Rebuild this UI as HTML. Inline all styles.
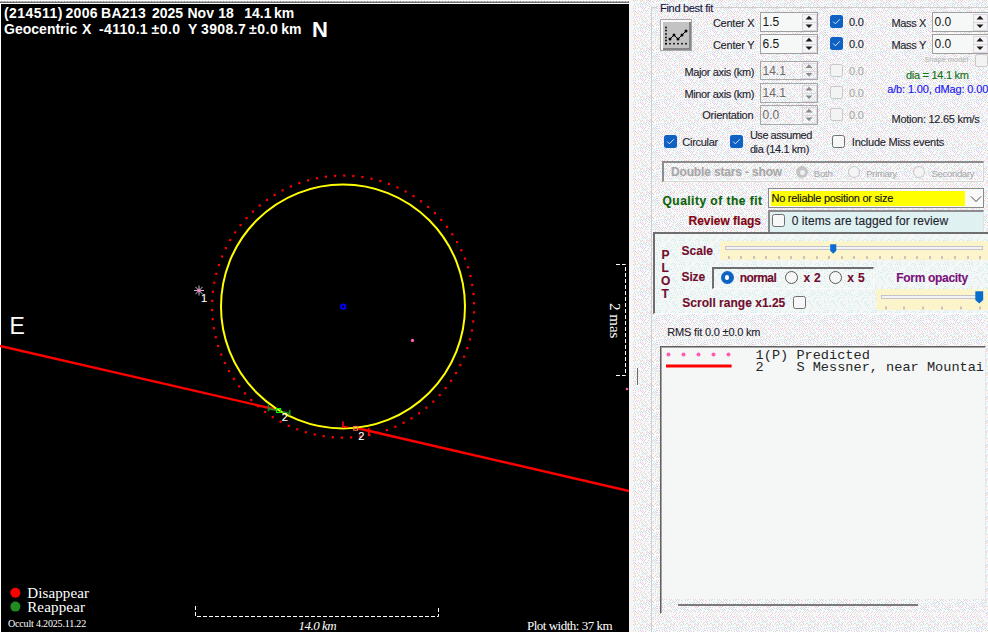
<!DOCTYPE html>
<html><head><meta charset="utf-8"><style>
html,body{margin:0;padding:0;}
body{width:988px;height:632px;overflow:hidden;position:relative;background:#ededed;font-family:"Liberation Sans",sans-serif;}
.t{position:absolute;white-space:pre;}
.k{-webkit-text-stroke:0.12px currentColor;}
</style></head><body>
<div style="position:absolute;left:0px;top:0px;width:629px;height:1px;background:#fbfbfb"></div><div style="position:absolute;left:0px;top:1px;width:629px;height:1px;background:repeating-linear-gradient(90deg,#c4c4c4 0 1px,#8e8e8e 1px 2px,#c4c4c4 2px 3px)"></div><div style="position:absolute;left:0px;top:2px;width:629px;height:1px;background:#6c6c6c"></div><div style="position:absolute;left:0px;top:3px;width:629px;height:1px;background:#fff"></div><div style="position:absolute;left:0px;top:3px;width:1px;height:629px;background:#fff"></div><div style="position:absolute;left:1px;top:4px;width:628px;height:628px;background:#000"></div><div style="position:absolute;left:629px;top:0px;width:4px;height:632px;background:#f6f6f6"></div><svg width="629" height="632" style="position:absolute;left:0;top:0"><line x1="0" y1="346" x2="276.5" y2="409.6" stroke="#ff0000" stroke-width="2.4"/><line x1="356.5" y1="428" x2="629" y2="491" stroke="#ff0000" stroke-width="2.4"/><circle cx="343" cy="306.5" r="122" fill="none" stroke="#ffff00" stroke-width="2"/><rect x="472.88" y="311.21" width="2.2" height="2.2" fill="#ff0000"/><rect x="472.16" y="320.33" width="2.2" height="2.2" fill="#ff0000"/><rect x="470.81" y="329.37" width="2.2" height="2.2" fill="#ff0000"/><rect x="468.83" y="338.30" width="2.2" height="2.2" fill="#ff0000"/><rect x="466.23" y="347.07" width="2.2" height="2.2" fill="#ff0000"/><rect x="463.03" y="355.63" width="2.2" height="2.2" fill="#ff0000"/><rect x="459.24" y="363.95" width="2.2" height="2.2" fill="#ff0000"/><rect x="454.87" y="371.99" width="2.2" height="2.2" fill="#ff0000"/><rect x="449.96" y="379.70" width="2.2" height="2.2" fill="#ff0000"/><rect x="444.52" y="387.05" width="2.2" height="2.2" fill="#ff0000"/><rect x="438.58" y="394.00" width="2.2" height="2.2" fill="#ff0000"/><rect x="432.17" y="400.52" width="2.2" height="2.2" fill="#ff0000"/><rect x="425.33" y="406.58" width="2.2" height="2.2" fill="#ff0000"/><rect x="418.07" y="412.15" width="2.2" height="2.2" fill="#ff0000"/><rect x="410.45" y="417.20" width="2.2" height="2.2" fill="#ff0000"/><rect x="402.49" y="421.70" width="2.2" height="2.2" fill="#ff0000"/><rect x="394.24" y="425.63" width="2.2" height="2.2" fill="#ff0000"/><rect x="385.73" y="428.99" width="2.2" height="2.2" fill="#ff0000"/><rect x="377.01" y="431.74" width="2.2" height="2.2" fill="#ff0000"/><rect x="368.12" y="433.87" width="2.2" height="2.2" fill="#ff0000"/><rect x="359.10" y="435.38" width="2.2" height="2.2" fill="#ff0000"/><rect x="350.00" y="436.26" width="2.2" height="2.2" fill="#ff0000"/><rect x="340.86" y="436.50" width="2.2" height="2.2" fill="#ff0000"/><rect x="331.72" y="436.10" width="2.2" height="2.2" fill="#ff0000"/><rect x="322.64" y="435.06" width="2.2" height="2.2" fill="#ff0000"/><rect x="313.65" y="433.39" width="2.2" height="2.2" fill="#ff0000"/><rect x="304.79" y="431.11" width="2.2" height="2.2" fill="#ff0000"/><rect x="296.12" y="428.20" width="2.2" height="2.2" fill="#ff0000"/><rect x="287.68" y="424.70" width="2.2" height="2.2" fill="#ff0000"/><rect x="279.49" y="420.63" width="2.2" height="2.2" fill="#ff0000"/><rect x="271.61" y="415.98" width="2.2" height="2.2" fill="#ff0000"/><rect x="264.08" y="410.81" width="2.2" height="2.2" fill="#ff0000"/><rect x="256.92" y="405.11" width="2.2" height="2.2" fill="#ff0000"/><rect x="250.18" y="398.94" width="2.2" height="2.2" fill="#ff0000"/><rect x="243.89" y="392.30" width="2.2" height="2.2" fill="#ff0000"/><rect x="238.07" y="385.25" width="2.2" height="2.2" fill="#ff0000"/><rect x="232.76" y="377.80" width="2.2" height="2.2" fill="#ff0000"/><rect x="227.98" y="370.01" width="2.2" height="2.2" fill="#ff0000"/><rect x="223.76" y="361.90" width="2.2" height="2.2" fill="#ff0000"/><rect x="220.12" y="353.51" width="2.2" height="2.2" fill="#ff0000"/><rect x="217.06" y="344.89" width="2.2" height="2.2" fill="#ff0000"/><rect x="214.62" y="336.08" width="2.2" height="2.2" fill="#ff0000"/><rect x="212.80" y="327.12" width="2.2" height="2.2" fill="#ff0000"/><rect x="211.60" y="318.06" width="2.2" height="2.2" fill="#ff0000"/><rect x="211.04" y="308.93" width="2.2" height="2.2" fill="#ff0000"/><rect x="211.12" y="299.79" width="2.2" height="2.2" fill="#ff0000"/><rect x="211.84" y="290.67" width="2.2" height="2.2" fill="#ff0000"/><rect x="213.19" y="281.63" width="2.2" height="2.2" fill="#ff0000"/><rect x="215.17" y="272.70" width="2.2" height="2.2" fill="#ff0000"/><rect x="217.77" y="263.93" width="2.2" height="2.2" fill="#ff0000"/><rect x="220.97" y="255.37" width="2.2" height="2.2" fill="#ff0000"/><rect x="224.76" y="247.05" width="2.2" height="2.2" fill="#ff0000"/><rect x="229.13" y="239.01" width="2.2" height="2.2" fill="#ff0000"/><rect x="234.04" y="231.30" width="2.2" height="2.2" fill="#ff0000"/><rect x="239.48" y="223.95" width="2.2" height="2.2" fill="#ff0000"/><rect x="245.42" y="217.00" width="2.2" height="2.2" fill="#ff0000"/><rect x="251.83" y="210.48" width="2.2" height="2.2" fill="#ff0000"/><rect x="258.67" y="204.42" width="2.2" height="2.2" fill="#ff0000"/><rect x="265.93" y="198.85" width="2.2" height="2.2" fill="#ff0000"/><rect x="273.55" y="193.80" width="2.2" height="2.2" fill="#ff0000"/><rect x="281.51" y="189.30" width="2.2" height="2.2" fill="#ff0000"/><rect x="289.76" y="185.37" width="2.2" height="2.2" fill="#ff0000"/><rect x="298.27" y="182.01" width="2.2" height="2.2" fill="#ff0000"/><rect x="306.99" y="179.26" width="2.2" height="2.2" fill="#ff0000"/><rect x="315.88" y="177.13" width="2.2" height="2.2" fill="#ff0000"/><rect x="324.90" y="175.62" width="2.2" height="2.2" fill="#ff0000"/><rect x="334.00" y="174.74" width="2.2" height="2.2" fill="#ff0000"/><rect x="343.14" y="174.50" width="2.2" height="2.2" fill="#ff0000"/><rect x="352.28" y="174.90" width="2.2" height="2.2" fill="#ff0000"/><rect x="361.36" y="175.94" width="2.2" height="2.2" fill="#ff0000"/><rect x="370.35" y="177.61" width="2.2" height="2.2" fill="#ff0000"/><rect x="379.21" y="179.89" width="2.2" height="2.2" fill="#ff0000"/><rect x="387.88" y="182.80" width="2.2" height="2.2" fill="#ff0000"/><rect x="396.32" y="186.30" width="2.2" height="2.2" fill="#ff0000"/><rect x="404.51" y="190.37" width="2.2" height="2.2" fill="#ff0000"/><rect x="412.39" y="195.02" width="2.2" height="2.2" fill="#ff0000"/><rect x="419.92" y="200.19" width="2.2" height="2.2" fill="#ff0000"/><rect x="427.08" y="205.89" width="2.2" height="2.2" fill="#ff0000"/><rect x="433.82" y="212.06" width="2.2" height="2.2" fill="#ff0000"/><rect x="440.11" y="218.70" width="2.2" height="2.2" fill="#ff0000"/><rect x="445.93" y="225.75" width="2.2" height="2.2" fill="#ff0000"/><rect x="451.24" y="233.20" width="2.2" height="2.2" fill="#ff0000"/><rect x="456.02" y="240.99" width="2.2" height="2.2" fill="#ff0000"/><rect x="460.24" y="249.10" width="2.2" height="2.2" fill="#ff0000"/><rect x="463.88" y="257.49" width="2.2" height="2.2" fill="#ff0000"/><rect x="466.94" y="266.11" width="2.2" height="2.2" fill="#ff0000"/><rect x="469.38" y="274.92" width="2.2" height="2.2" fill="#ff0000"/><rect x="471.20" y="283.88" width="2.2" height="2.2" fill="#ff0000"/><rect x="472.40" y="292.94" width="2.2" height="2.2" fill="#ff0000"/><rect x="472.96" y="302.07" width="2.2" height="2.2" fill="#ff0000"/><line x1="199" y1="290.5" x2="204.00" y2="290.50" stroke="#c4bcd4" stroke-width="1"/><line x1="199" y1="290.5" x2="202.54" y2="294.04" stroke="#c4bcd4" stroke-width="1"/><line x1="199" y1="290.5" x2="199.00" y2="295.50" stroke="#c4bcd4" stroke-width="1"/><line x1="199" y1="290.5" x2="195.46" y2="294.04" stroke="#c4bcd4" stroke-width="1"/><line x1="199" y1="290.5" x2="194.00" y2="290.50" stroke="#c4bcd4" stroke-width="1"/><line x1="199" y1="290.5" x2="195.46" y2="286.96" stroke="#c4bcd4" stroke-width="1"/><line x1="199" y1="290.5" x2="199.00" y2="285.50" stroke="#c4bcd4" stroke-width="1"/><line x1="199" y1="290.5" x2="202.54" y2="286.96" stroke="#c4bcd4" stroke-width="1"/><circle cx="199" cy="290.5" r="1.8" fill="#ff78c8"/><circle cx="343.2" cy="306.6" r="2.2" fill="none" stroke="#0000ff" stroke-width="2"/><circle cx="412.5" cy="340.4" r="1.7" fill="#ff60b0"/><circle cx="627" cy="389" r="1.3" fill="#ff60b0"/><polyline points="268.5,408.6 276.3,410.3" fill="none" stroke="#208a20" stroke-width="1.6"/><line x1="268.5" y1="404.5" x2="268.5" y2="411.2" stroke="#208a20" stroke-width="1.6"/><polyline points="282.5,411.7 289.7,413.3" fill="none" stroke="#208a20" stroke-width="1.6"/><line x1="289.7" y1="409.8" x2="289.7" y2="415.5" stroke="#208a20" stroke-width="1.6"/><rect x="276.6" y="408.5" width="4" height="4" fill="none" stroke="#00ff00" stroke-width="1.1"/><line x1="343" y1="421.5" x2="343" y2="428" stroke="#ff0000" stroke-width="1.6"/><line x1="342.5" y1="426.3" x2="348.3" y2="427.2" stroke="#ff0000" stroke-width="1.6"/><line x1="368.8" y1="428" x2="368.8" y2="435.5" stroke="#ff0000" stroke-width="1.6"/><rect x="368" y="434" width="2.4" height="1.6" fill="#ff0000"/><rect x="353.7" y="426.4" width="3.8" height="3.8" fill="none" stroke="#ff6a4a" stroke-width="1.1"/><polyline points="616,264.5 625.5,264.5 625.5,375.5 616,375.5" fill="none" stroke="#fff" stroke-width="1" stroke-dasharray="4 2"/><polyline points="195.5,606 195.5,616.5 438.5,616.5 438.5,606" fill="none" stroke="#fff" stroke-width="1" stroke-dasharray="4 2"/><circle cx="15.4" cy="592.8" r="5" fill="#ff0000"/><circle cx="15.4" cy="606.6" r="5" fill="#228b22"/></svg><div class="t" style="left:3.90px;top:6.15px;font:bold 14px/14px 'Liberation Sans', sans-serif;color:#ffffff;letter-spacing:0.45px">(214511)</div><div class="t" style="left:65.50px;top:6.15px;font:bold 14px/14px 'Liberation Sans', sans-serif;color:#ffffff;letter-spacing:0.3px">2006</div><div class="t" style="left:101.10px;top:6.15px;font:bold 14px/14px 'Liberation Sans', sans-serif;color:#ffffff;letter-spacing:0.25px">BA213</div><div class="t" style="left:152.00px;top:6.15px;font:bold 14px/14px 'Liberation Sans', sans-serif;color:#ffffff;letter-spacing:0px">2025</div><div class="t" style="left:187.50px;top:6.15px;font:bold 14px/14px 'Liberation Sans', sans-serif;color:#ffffff;letter-spacing:0px">Nov</div><div class="t" style="left:218.30px;top:6.15px;font:bold 14px/14px 'Liberation Sans', sans-serif;color:#ffffff;letter-spacing:0px">18</div><div class="t" style="left:244.20px;top:6.15px;font:bold 14px/14px 'Liberation Sans', sans-serif;color:#ffffff;letter-spacing:0px">14.1</div><div class="t" style="left:274.00px;top:6.15px;font:bold 14px/14px 'Liberation Sans', sans-serif;color:#ffffff;letter-spacing:0px">km</div><div class="t" style="left:4.10px;top:22.25px;font:bold 14px/14px 'Liberation Sans', sans-serif;color:#ffffff;letter-spacing:0px">Geocentric</div><div class="t" style="left:82.10px;top:22.25px;font:bold 14px/14px 'Liberation Sans', sans-serif;color:#ffffff;letter-spacing:0px">X</div><div class="t" style="left:99.10px;top:22.25px;font:bold 14px/14px 'Liberation Sans', sans-serif;color:#ffffff;letter-spacing:0.3px">-4110.1</div><div class="t" style="left:151.50px;top:22.25px;font:bold 14px/14px 'Liberation Sans', sans-serif;color:#ffffff;letter-spacing:0.5px">±0.0</div><div class="t" style="left:188.00px;top:22.25px;font:bold 14px/14px 'Liberation Sans', sans-serif;color:#ffffff;letter-spacing:0px">Y</div><div class="t" style="left:201.00px;top:22.25px;font:bold 14px/14px 'Liberation Sans', sans-serif;color:#ffffff;letter-spacing:0.4px">3908.7</div><div class="t" style="left:249.10px;top:22.25px;font:bold 14px/14px 'Liberation Sans', sans-serif;color:#ffffff;letter-spacing:0.5px">±0.0</div><div class="t" style="left:281.20px;top:22.25px;font:bold 14px/14px 'Liberation Sans', sans-serif;color:#ffffff;letter-spacing:0px">km</div><div class="t" style="left:312.00px;top:18.87px;font:bold 22px/22px 'Liberation Sans', sans-serif;color:#ffffff;">N</div><div class="t" style="left:9.50px;top:314.53px;font:23px/23px 'Liberation Sans', sans-serif;color:#ffffff;">E</div><div class="t k" style="left:201.00px;top:292.69px;font:11px/11px 'Liberation Sans', sans-serif;color:#ffffff;">1</div><div class="t k" style="left:281.80px;top:412.29px;font:11px/11px 'Liberation Sans', sans-serif;color:#ffffff;">2</div><div class="t k" style="left:358.30px;top:431.29px;font:11px/11px 'Liberation Sans', sans-serif;color:#ffffff;">2</div><div class="t" style="left:27.20px;top:585.84px;font:15px/15px 'Liberation Serif', serif;color:#ffffff;letter-spacing:0.132px;">Disappear</div><div class="t" style="left:27.20px;top:599.54px;font:15px/15px 'Liberation Serif', serif;color:#ffffff;letter-spacing:0.171px;">Reappear</div><div class="t" style="left:8.00px;top:619.23px;font:10px/10px 'Liberation Serif', serif;color:#ffffff;letter-spacing:-0.173px;">Occult 4.2025.11.22</div><div class="t" style="left:298.60px;top:618.81px;font:italic 13px/13px 'Liberation Serif', serif;color:#ffffff;letter-spacing:-0.523px;">14.0 km</div><div class="t" style="left:527.00px;top:618.81px;font:13px/13px 'Liberation Serif', serif;color:#ffffff;letter-spacing:-0.502px;">Plot width: 37 km</div><div class="t" style="left:605.5px;top:313px;font:15px/15px 'Liberation Serif', serif;color:#fff;transform-origin:0 0;transform:translate(16px,-10px) rotate(90deg);">2 mas</div><svg width="355" height="632" style="position:absolute;left:633px;top:0" shape-rendering="crispEdges"><defs><pattern id="dz" width="24" height="24" patternUnits="userSpaceOnUse"><rect width="24" height="24" fill="#f7f8f8"/><rect x="0" y="0" width="1" height="1" fill="#f0d0c6"/><rect x="2" y="0" width="1" height="1" fill="#f0d0c6"/><rect x="4" y="0" width="1" height="1" fill="#c8ecec"/><rect x="7" y="0" width="1" height="1" fill="#f0d0c6"/><rect x="9" y="0" width="1" height="1" fill="#f0d0c6"/><rect x="13" y="0" width="1" height="1" fill="#d0d0f4"/><rect x="15" y="0" width="1" height="1" fill="#f0d0c6"/><rect x="17" y="0" width="1" height="1" fill="#f0d0c6"/><rect x="21" y="0" width="1" height="1" fill="#c8ecec"/><rect x="1" y="1" width="1" height="1" fill="#c8ecec"/><rect x="8" y="1" width="1" height="1" fill="#f0d0c6"/><rect x="10" y="1" width="1" height="1" fill="#c8ecec"/><rect x="14" y="1" width="1" height="1" fill="#f0d0c6"/><rect x="16" y="1" width="1" height="1" fill="#d0d0f4"/><rect x="19" y="1" width="1" height="1" fill="#f0d0c6"/><rect x="23" y="1" width="1" height="1" fill="#d0d0f4"/><rect x="7" y="2" width="1" height="1" fill="#c8ecec"/><rect x="11" y="2" width="1" height="1" fill="#d0d0f4"/><rect x="13" y="2" width="1" height="1" fill="#f2c8f2"/><rect x="17" y="2" width="1" height="1" fill="#c8ecec"/><rect x="20" y="2" width="1" height="1" fill="#f2c8f2"/><rect x="3" y="3" width="1" height="1" fill="#d0d0f4"/><rect x="6" y="3" width="1" height="1" fill="#c8ecec"/><rect x="8" y="3" width="1" height="1" fill="#c8ecec"/><rect x="10" y="3" width="1" height="1" fill="#f0d0c6"/><rect x="12" y="3" width="1" height="1" fill="#d0d0f4"/><rect x="15" y="3" width="1" height="1" fill="#f0d0c6"/><rect x="1" y="4" width="1" height="1" fill="#d0d0f4"/><rect x="4" y="4" width="1" height="1" fill="#c8ecec"/><rect x="7" y="4" width="1" height="1" fill="#d0d0f4"/><rect x="9" y="4" width="1" height="1" fill="#f0d0c6"/><rect x="13" y="4" width="1" height="1" fill="#c8ecec"/><rect x="16" y="4" width="1" height="1" fill="#d0d0f4"/><rect x="19" y="4" width="1" height="1" fill="#f2c8f2"/><rect x="23" y="4" width="1" height="1" fill="#f0d0c6"/><rect x="5" y="5" width="1" height="1" fill="#d0d0f4"/><rect x="8" y="5" width="1" height="1" fill="#c8ecec"/><rect x="12" y="5" width="1" height="1" fill="#d0d0f4"/><rect x="14" y="5" width="1" height="1" fill="#c8ecec"/><rect x="17" y="5" width="1" height="1" fill="#c8ecec"/><rect x="21" y="5" width="1" height="1" fill="#c8ecec"/><rect x="0" y="6" width="1" height="1" fill="#f2c8f2"/><rect x="2" y="6" width="1" height="1" fill="#f0d0c6"/><rect x="7" y="6" width="1" height="1" fill="#d0d0f4"/><rect x="9" y="6" width="1" height="1" fill="#c8ecec"/><rect x="16" y="6" width="1" height="1" fill="#d0d0f4"/><rect x="18" y="6" width="1" height="1" fill="#f0d0c6"/><rect x="23" y="6" width="1" height="1" fill="#d0d0f4"/><rect x="5" y="7" width="1" height="1" fill="#f0d0c6"/><rect x="8" y="7" width="1" height="1" fill="#f2c8f2"/><rect x="10" y="7" width="1" height="1" fill="#f2c8f2"/><rect x="12" y="7" width="1" height="1" fill="#f0d0c6"/><rect x="20" y="7" width="1" height="1" fill="#c8ecec"/><rect x="22" y="7" width="1" height="1" fill="#c8ecec"/><rect x="0" y="8" width="1" height="1" fill="#d0d0f4"/><rect x="2" y="8" width="1" height="1" fill="#d0d0f4"/><rect x="9" y="8" width="1" height="1" fill="#f0d0c6"/><rect x="11" y="8" width="1" height="1" fill="#f2c8f2"/><rect x="15" y="8" width="1" height="1" fill="#f0d0c6"/><rect x="19" y="8" width="1" height="1" fill="#f2c8f2"/><rect x="21" y="8" width="1" height="1" fill="#f0d0c6"/><rect x="23" y="8" width="1" height="1" fill="#f0d0c6"/><rect x="16" y="9" width="1" height="1" fill="#c8ecec"/><rect x="18" y="9" width="1" height="1" fill="#f0d0c6"/><rect x="20" y="9" width="1" height="1" fill="#c8ecec"/><rect x="22" y="9" width="1" height="1" fill="#c8ecec"/><rect x="1" y="10" width="1" height="1" fill="#d0d0f4"/><rect x="5" y="10" width="1" height="1" fill="#f0d0c6"/><rect x="10" y="10" width="1" height="1" fill="#d0d0f4"/><rect x="12" y="10" width="1" height="1" fill="#d0d0f4"/><rect x="14" y="10" width="1" height="1" fill="#d0d0f4"/><rect x="19" y="10" width="1" height="1" fill="#c8ecec"/><rect x="21" y="10" width="1" height="1" fill="#c8ecec"/><rect x="23" y="10" width="1" height="1" fill="#c8ecec"/><rect x="0" y="11" width="1" height="1" fill="#f0d0c6"/><rect x="2" y="11" width="1" height="1" fill="#d0d0f4"/><rect x="6" y="11" width="1" height="1" fill="#f2c8f2"/><rect x="8" y="11" width="1" height="1" fill="#f0d0c6"/><rect x="13" y="11" width="1" height="1" fill="#f0d0c6"/><rect x="15" y="11" width="1" height="1" fill="#c8ecec"/><rect x="22" y="11" width="1" height="1" fill="#f0d0c6"/><rect x="3" y="12" width="1" height="1" fill="#f0d0c6"/><rect x="5" y="12" width="1" height="1" fill="#c8ecec"/><rect x="7" y="12" width="1" height="1" fill="#f2c8f2"/><rect x="9" y="12" width="1" height="1" fill="#d0d0f4"/><rect x="12" y="12" width="1" height="1" fill="#f0d0c6"/><rect x="18" y="12" width="1" height="1" fill="#d0d0f4"/><rect x="23" y="12" width="1" height="1" fill="#c8ecec"/><rect x="1" y="13" width="1" height="1" fill="#f0d0c6"/><rect x="4" y="13" width="1" height="1" fill="#f0d0c6"/><rect x="11" y="13" width="1" height="1" fill="#c8ecec"/><rect x="14" y="13" width="1" height="1" fill="#f0d0c6"/><rect x="17" y="13" width="1" height="1" fill="#d0d0f4"/><rect x="20" y="13" width="1" height="1" fill="#c8ecec"/><rect x="22" y="13" width="1" height="1" fill="#d0d0f4"/><rect x="2" y="14" width="1" height="1" fill="#f0d0c6"/><rect x="5" y="14" width="1" height="1" fill="#f0d0c6"/><rect x="7" y="14" width="1" height="1" fill="#c8ecec"/><rect x="18" y="14" width="1" height="1" fill="#f0d0c6"/><rect x="1" y="15" width="1" height="1" fill="#f0d0c6"/><rect x="8" y="15" width="1" height="1" fill="#f0d0c6"/><rect x="11" y="15" width="1" height="1" fill="#f2c8f2"/><rect x="17" y="15" width="1" height="1" fill="#f0d0c6"/><rect x="22" y="15" width="1" height="1" fill="#f2c8f2"/><rect x="0" y="16" width="1" height="1" fill="#c8ecec"/><rect x="3" y="16" width="1" height="1" fill="#f2c8f2"/><rect x="5" y="16" width="1" height="1" fill="#f2c8f2"/><rect x="7" y="16" width="1" height="1" fill="#f0d0c6"/><rect x="10" y="16" width="1" height="1" fill="#f0d0c6"/><rect x="15" y="16" width="1" height="1" fill="#f2c8f2"/><rect x="21" y="16" width="1" height="1" fill="#c8ecec"/><rect x="2" y="17" width="1" height="1" fill="#f0d0c6"/><rect x="4" y="17" width="1" height="1" fill="#f2c8f2"/><rect x="9" y="17" width="1" height="1" fill="#c8ecec"/><rect x="11" y="17" width="1" height="1" fill="#c8ecec"/><rect x="13" y="17" width="1" height="1" fill="#c8ecec"/><rect x="16" y="17" width="1" height="1" fill="#f2c8f2"/><rect x="18" y="17" width="1" height="1" fill="#f2c8f2"/><rect x="20" y="17" width="1" height="1" fill="#f0d0c6"/><rect x="22" y="17" width="1" height="1" fill="#f0d0c6"/><rect x="0" y="18" width="1" height="1" fill="#d0d0f4"/><rect x="6" y="18" width="1" height="1" fill="#d0d0f4"/><rect x="8" y="18" width="1" height="1" fill="#f0d0c6"/><rect x="12" y="18" width="1" height="1" fill="#f0d0c6"/><rect x="19" y="18" width="1" height="1" fill="#d0d0f4"/><rect x="3" y="19" width="1" height="1" fill="#f0d0c6"/><rect x="9" y="19" width="1" height="1" fill="#f0d0c6"/><rect x="13" y="19" width="1" height="1" fill="#c8ecec"/><rect x="17" y="19" width="1" height="1" fill="#c8ecec"/><rect x="20" y="19" width="1" height="1" fill="#f0d0c6"/><rect x="22" y="19" width="1" height="1" fill="#f2c8f2"/><rect x="1" y="20" width="1" height="1" fill="#f2c8f2"/><rect x="4" y="20" width="1" height="1" fill="#f0d0c6"/><rect x="6" y="20" width="1" height="1" fill="#c8ecec"/><rect x="10" y="20" width="1" height="1" fill="#d0d0f4"/><rect x="14" y="20" width="1" height="1" fill="#f0d0c6"/><rect x="0" y="21" width="1" height="1" fill="#f2c8f2"/><rect x="2" y="21" width="1" height="1" fill="#f0d0c6"/><rect x="9" y="21" width="1" height="1" fill="#f2c8f2"/><rect x="11" y="21" width="1" height="1" fill="#f0d0c6"/><rect x="13" y="21" width="1" height="1" fill="#f0d0c6"/><rect x="20" y="21" width="1" height="1" fill="#f0d0c6"/><rect x="1" y="22" width="1" height="1" fill="#c8ecec"/><rect x="5" y="22" width="1" height="1" fill="#c8ecec"/><rect x="8" y="22" width="1" height="1" fill="#c8ecec"/><rect x="10" y="22" width="1" height="1" fill="#c8ecec"/><rect x="12" y="22" width="1" height="1" fill="#d0d0f4"/><rect x="16" y="22" width="1" height="1" fill="#c8ecec"/><rect x="18" y="22" width="1" height="1" fill="#c8ecec"/><rect x="23" y="22" width="1" height="1" fill="#c8ecec"/><rect x="2" y="23" width="1" height="1" fill="#f0d0c6"/><rect x="6" y="23" width="1" height="1" fill="#f0d0c6"/><rect x="14" y="23" width="1" height="1" fill="#c8ecec"/><rect x="17" y="23" width="1" height="1" fill="#f2c8f2"/><rect x="22" y="23" width="1" height="1" fill="#f0d0c6"/></pattern><pattern id="dc" width="24" height="24" patternUnits="userSpaceOnUse"><rect width="24" height="24" fill="#f5f7f7"/><rect x="0" y="0" width="1" height="1" fill="#c4ecec"/><rect x="2" y="0" width="1" height="1" fill="#c4ecec"/><rect x="8" y="0" width="1" height="1" fill="#c4ecec"/><rect x="14" y="0" width="1" height="1" fill="#cdeeee"/><rect x="18" y="0" width="1" height="1" fill="#c4ecec"/><rect x="22" y="0" width="1" height="1" fill="#c4ecec"/><rect x="3" y="1" width="1" height="1" fill="#cdeeee"/><rect x="17" y="1" width="1" height="1" fill="#c4ecec"/><rect x="4" y="2" width="1" height="1" fill="#c4ecec"/><rect x="1" y="3" width="1" height="1" fill="#c4ecec"/><rect x="10" y="3" width="1" height="1" fill="#c4ecec"/><rect x="12" y="3" width="1" height="1" fill="#c4ecec"/><rect x="17" y="3" width="1" height="1" fill="#cdeeee"/><rect x="23" y="3" width="1" height="1" fill="#cdeeee"/><rect x="18" y="4" width="1" height="1" fill="#cdeeee"/><rect x="1" y="5" width="1" height="1" fill="#c4ecec"/><rect x="9" y="5" width="1" height="1" fill="#cdeeee"/><rect x="12" y="5" width="1" height="1" fill="#c4ecec"/><rect x="14" y="5" width="1" height="1" fill="#c4ecec"/><rect x="20" y="5" width="1" height="1" fill="#c4ecec"/><rect x="23" y="5" width="1" height="1" fill="#c4ecec"/><rect x="10" y="6" width="1" height="1" fill="#cdeeee"/><rect x="21" y="6" width="1" height="1" fill="#c4ecec"/><rect x="2" y="7" width="1" height="1" fill="#c4ecec"/><rect x="5" y="7" width="1" height="1" fill="#cdeeee"/><rect x="11" y="7" width="1" height="1" fill="#cdeeee"/><rect x="16" y="7" width="1" height="1" fill="#c4ecec"/><rect x="19" y="7" width="1" height="1" fill="#cdeeee"/><rect x="7" y="8" width="1" height="1" fill="#c4ecec"/><rect x="9" y="8" width="1" height="1" fill="#c4ecec"/><rect x="5" y="9" width="1" height="1" fill="#cdeeee"/><rect x="13" y="9" width="1" height="1" fill="#cdeeee"/><rect x="15" y="9" width="1" height="1" fill="#cdeeee"/><rect x="18" y="9" width="1" height="1" fill="#c4ecec"/><rect x="23" y="9" width="1" height="1" fill="#cdeeee"/><rect x="2" y="10" width="1" height="1" fill="#c4ecec"/><rect x="14" y="10" width="1" height="1" fill="#cdeeee"/><rect x="13" y="11" width="1" height="1" fill="#cdeeee"/><rect x="2" y="12" width="1" height="1" fill="#cdeeee"/><rect x="7" y="12" width="1" height="1" fill="#cdeeee"/><rect x="20" y="12" width="1" height="1" fill="#cdeeee"/><rect x="23" y="12" width="1" height="1" fill="#c4ecec"/><rect x="6" y="13" width="1" height="1" fill="#cdeeee"/><rect x="9" y="13" width="1" height="1" fill="#c4ecec"/><rect x="12" y="13" width="1" height="1" fill="#c4ecec"/><rect x="17" y="13" width="1" height="1" fill="#cdeeee"/><rect x="0" y="14" width="1" height="1" fill="#c4ecec"/><rect x="4" y="14" width="1" height="1" fill="#c4ecec"/><rect x="8" y="14" width="1" height="1" fill="#c4ecec"/><rect x="15" y="14" width="1" height="1" fill="#c4ecec"/><rect x="23" y="14" width="1" height="1" fill="#cdeeee"/><rect x="9" y="15" width="1" height="1" fill="#cdeeee"/><rect x="16" y="15" width="1" height="1" fill="#c4ecec"/><rect x="10" y="16" width="1" height="1" fill="#c4ecec"/><rect x="17" y="16" width="1" height="1" fill="#c4ecec"/><rect x="19" y="16" width="1" height="1" fill="#c4ecec"/><rect x="0" y="17" width="1" height="1" fill="#c4ecec"/><rect x="5" y="17" width="1" height="1" fill="#cdeeee"/><rect x="16" y="17" width="1" height="1" fill="#c4ecec"/><rect x="20" y="17" width="1" height="1" fill="#c4ecec"/><rect x="4" y="18" width="1" height="1" fill="#cdeeee"/><rect x="12" y="18" width="1" height="1" fill="#c4ecec"/><rect x="18" y="18" width="1" height="1" fill="#cdeeee"/><rect x="0" y="19" width="1" height="1" fill="#cdeeee"/><rect x="19" y="19" width="1" height="1" fill="#cdeeee"/><rect x="2" y="20" width="1" height="1" fill="#c4ecec"/><rect x="10" y="20" width="1" height="1" fill="#c4ecec"/><rect x="21" y="20" width="1" height="1" fill="#cdeeee"/><rect x="19" y="21" width="1" height="1" fill="#cdeeee"/><rect x="0" y="22" width="1" height="1" fill="#c4ecec"/><rect x="3" y="22" width="1" height="1" fill="#cdeeee"/><rect x="8" y="22" width="1" height="1" fill="#cdeeee"/><rect x="23" y="22" width="1" height="1" fill="#cdeeee"/><rect x="2" y="23" width="1" height="1" fill="#cdeeee"/><rect x="9" y="23" width="1" height="1" fill="#cdeeee"/><rect x="15" y="23" width="1" height="1" fill="#cdeeee"/><rect x="17" y="23" width="1" height="1" fill="#cdeeee"/></pattern></defs><rect width="355" height="632" fill="url(#dz)"/><rect x="22" y="234" width="333" height="79" fill="url(#dc)"/></svg><div style="position:absolute;left:637px;top:368px;width:1px;height:17px;background:#6a6a6a"></div><div style="position:absolute;left:651px;top:8px;width:1px;height:624px;background:#cfcfcf"></div><div style="position:absolute;left:651px;top:7px;width:6px;height:1px;background:#cfcfcf"></div><div style="position:absolute;left:716px;top:7px;width:272px;height:1px;background:#cfcfcf"></div><div class="t k" style="left:660.00px;top:3.09px;font:11px/11px 'Liberation Sans', sans-serif;color:#14143c;letter-spacing:-0.297px;">Find best fit</div><div style="position:absolute;left:660px;top:19px;width:32px;height:32px;background:#c3c3c3;box-sizing:border-box;border:1px solid #a8a8a8;box-shadow:inset 2px 2px 0 #fbfbfb,inset -2px -2px 0 #868686"></div><svg width="32" height="31" style="position:absolute;left:660px;top:19px"><circle cx="6" cy="8.5" r="0.9" fill="#000"/><circle cx="6" cy="11.5" r="0.9" fill="#000"/><circle cx="6" cy="15" r="0.9" fill="#000"/><circle cx="6" cy="18.5" r="0.9" fill="#000"/><circle cx="6" cy="21.5" r="0.9" fill="#000"/><circle cx="6" cy="24.7" r="0.9" fill="#000"/><circle cx="6" cy="24.7" r="0.9" fill="#000"/><circle cx="10" cy="24.7" r="0.9" fill="#000"/><circle cx="14" cy="24.7" r="0.9" fill="#000"/><circle cx="18" cy="24.7" r="0.9" fill="#000"/><circle cx="22" cy="24.7" r="0.9" fill="#000"/><circle cx="26" cy="24.7" r="0.9" fill="#000"/><polyline points="10,20 14,16 18,20 22,16 26,12" fill="none" stroke="#000" stroke-width="1"/><circle cx="10" cy="20" r="1.5" fill="#000"/><circle cx="14" cy="16" r="1.5" fill="#000"/><circle cx="18" cy="20" r="1.5" fill="#000"/><circle cx="22" cy="16" r="1.5" fill="#000"/><circle cx="26" cy="12" r="1.5" fill="#000"/></svg><div class="t k" style="left:712.90px;top:17.89px;font:11px/11px 'Liberation Sans', sans-serif;color:#1e1e2e;letter-spacing:-0.238px;">Center X</div><div class="t k" style="left:712.90px;top:39.69px;font:11px/11px 'Liberation Sans', sans-serif;color:#1e1e2e;letter-spacing:-0.213px;">Center Y</div><div class="t k" style="left:684.50px;top:66.99px;font:11px/11px 'Liberation Sans', sans-serif;color:#1e1e2e;letter-spacing:-0.378px;">Major axis (km)</div><div class="t k" style="left:684.50px;top:88.59px;font:11px/11px 'Liberation Sans', sans-serif;color:#1e1e2e;letter-spacing:-0.378px;">Minor axis (km)</div><div class="t k" style="left:702.30px;top:109.79px;font:11px/11px 'Liberation Sans', sans-serif;color:#1e1e2e;letter-spacing:-0.255px;">Orientation</div><div style="position:absolute;left:760px;top:12px;width:56px;height:18px;background:#f6f7f7;border:1px solid #a0a0a0"></div><div style="position:absolute;left:802px;top:14px;width:13px;height:7.0px;border:1px solid #dcd6e0;background:#f4f4f4"></div><div style="position:absolute;left:802px;top:22.0px;width:13px;height:7.0px;border:1px solid #dcd6e0;background:#f4f4f4"></div><svg width="15" height="20" style="position:absolute;left:802px;top:12px"><polygon points="3.5,7.4 10.5,7.4 7,3.8" fill="#1a1a1a"/><polygon points="3.5,12.4 10.5,12.4 7,16.0" fill="#1a1a1a"/></svg><div class="t " style="left:762.50px;top:15.74px;font:12px/12px 'Liberation Sans', sans-serif;color:#141414;">1.5</div><div style="position:absolute;left:760px;top:34px;width:56px;height:18px;background:#f6f7f7;border:1px solid #a0a0a0"></div><div style="position:absolute;left:802px;top:36px;width:13px;height:7.0px;border:1px solid #dcd6e0;background:#f4f4f4"></div><div style="position:absolute;left:802px;top:44.0px;width:13px;height:7.0px;border:1px solid #dcd6e0;background:#f4f4f4"></div><svg width="15" height="20" style="position:absolute;left:802px;top:34px"><polygon points="3.5,7.4 10.5,7.4 7,3.8" fill="#1a1a1a"/><polygon points="3.5,12.4 10.5,12.4 7,16.0" fill="#1a1a1a"/></svg><div class="t " style="left:762.50px;top:37.74px;font:12px/12px 'Liberation Sans', sans-serif;color:#141414;">6.5</div><div style="position:absolute;left:760px;top:61px;width:56px;height:17px;background:transparent;border:1px solid #a8a8a8"></div><div style="position:absolute;left:802px;top:63px;width:13px;height:6.5px;border:1px solid #dcd6e0;background:transparent"></div><div style="position:absolute;left:802px;top:70.5px;width:13px;height:6.5px;border:1px solid #dcd6e0;background:transparent"></div><svg width="15" height="19" style="position:absolute;left:802px;top:61px"><polygon points="3.5,6.9 10.5,6.9 7,3.3" fill="#8a8a8a"/><polygon points="3.5,11.9 10.5,11.9 7,15.5" fill="#8a8a8a"/></svg><div class="t " style="left:762.50px;top:64.74px;font:12px/12px 'Liberation Sans', sans-serif;color:#6a6a6a;">14.1</div><div style="position:absolute;left:760px;top:83px;width:56px;height:18px;background:transparent;border:1px solid #a8a8a8"></div><div style="position:absolute;left:802px;top:85px;width:13px;height:7.0px;border:1px solid #dcd6e0;background:transparent"></div><div style="position:absolute;left:802px;top:93.0px;width:13px;height:7.0px;border:1px solid #dcd6e0;background:transparent"></div><svg width="15" height="20" style="position:absolute;left:802px;top:83px"><polygon points="3.5,7.4 10.5,7.4 7,3.8" fill="#8a8a8a"/><polygon points="3.5,12.4 10.5,12.4 7,16.0" fill="#8a8a8a"/></svg><div class="t " style="left:762.50px;top:86.74px;font:12px/12px 'Liberation Sans', sans-serif;color:#6a6a6a;">14.1</div><div style="position:absolute;left:760px;top:105px;width:56px;height:18px;background:transparent;border:1px solid #a8a8a8"></div><div style="position:absolute;left:802px;top:107px;width:13px;height:7.0px;border:1px solid #dcd6e0;background:transparent"></div><div style="position:absolute;left:802px;top:115.0px;width:13px;height:7.0px;border:1px solid #dcd6e0;background:transparent"></div><svg width="15" height="20" style="position:absolute;left:802px;top:105px"><polygon points="3.5,7.4 10.5,7.4 7,3.8" fill="#8a8a8a"/><polygon points="3.5,12.4 10.5,12.4 7,16.0" fill="#8a8a8a"/></svg><div class="t " style="left:762.50px;top:108.74px;font:12px/12px 'Liberation Sans', sans-serif;color:#6a6a6a;">0.0</div><div style="position:absolute;left:830px;top:15px;width:13px;height:13px;background:#0f62c4;border-radius:2.5px"></div><svg width="13" height="13" style="position:absolute;left:830px;top:15px"><polyline points="3.2,6.6 5.4,8.8 9.8,4.3" fill="none" stroke="#f0f0ff" stroke-width="0.9"/></svg><div style="position:absolute;left:830px;top:37px;width:13px;height:13px;background:#0f62c4;border-radius:2.5px"></div><svg width="13" height="13" style="position:absolute;left:830px;top:37px"><polyline points="3.2,6.6 5.4,8.8 9.8,4.3" fill="none" stroke="#f0f0ff" stroke-width="0.9"/></svg><div style="position:absolute;left:830px;top:64px;width:11px;height:11px;background:#f3f3f3;border:1px solid #c8c8c8;border-radius:2.5px"></div><div style="position:absolute;left:830px;top:86px;width:11px;height:11px;background:#f3f3f3;border:1px solid #c8c8c8;border-radius:2.5px"></div><div style="position:absolute;left:830px;top:108px;width:11px;height:11px;background:#f3f3f3;border:1px solid #c8c8c8;border-radius:2.5px"></div><div class="t k" style="left:849.00px;top:17.09px;font:11px/11px 'Liberation Sans', sans-serif;color:#1e1e2e;letter-spacing:-0.263px;">0.0</div><div class="t k" style="left:849.00px;top:39.09px;font:11px/11px 'Liberation Sans', sans-serif;color:#1e1e2e;letter-spacing:-0.263px;">0.0</div><div class="t " style="left:849.00px;top:66.29px;font:11px/11px 'Liberation Sans', sans-serif;color:#a6a6a6;letter-spacing:-0.263px;">0.0</div><div class="t " style="left:849.00px;top:88.29px;font:11px/11px 'Liberation Sans', sans-serif;color:#a6a6a6;letter-spacing:-0.263px;">0.0</div><div class="t " style="left:849.00px;top:110.29px;font:11px/11px 'Liberation Sans', sans-serif;color:#a6a6a6;letter-spacing:-0.263px;">0.0</div><div class="t k" style="left:891.50px;top:18.19px;font:11px/11px 'Liberation Sans', sans-serif;color:#1e1e2e;letter-spacing:-0.362px;">Mass X</div><div class="t k" style="left:891.50px;top:39.89px;font:11px/11px 'Liberation Sans', sans-serif;color:#1e1e2e;letter-spacing:-0.329px;">Mass Y</div><div style="position:absolute;left:932px;top:12px;width:55px;height:18px;background:#f6f7f7;border:1px solid #a0a0a0"></div><div style="position:absolute;left:973px;top:14px;width:13px;height:7.0px;border:1px solid #dcd6e0;background:#f4f4f4"></div><div style="position:absolute;left:973px;top:22.0px;width:13px;height:7.0px;border:1px solid #dcd6e0;background:#f4f4f4"></div><svg width="15" height="20" style="position:absolute;left:973px;top:12px"><polygon points="3.5,7.4 10.5,7.4 7,3.8" fill="#1a1a1a"/><polygon points="3.5,12.4 10.5,12.4 7,16.0" fill="#1a1a1a"/></svg><div class="t " style="left:934.50px;top:15.74px;font:12px/12px 'Liberation Sans', sans-serif;color:#141414;">0.0</div><div style="position:absolute;left:932px;top:34px;width:55px;height:18px;background:#f6f7f7;border:1px solid #a0a0a0"></div><div style="position:absolute;left:973px;top:36px;width:13px;height:7.0px;border:1px solid #dcd6e0;background:#f4f4f4"></div><div style="position:absolute;left:973px;top:44.0px;width:13px;height:7.0px;border:1px solid #dcd6e0;background:#f4f4f4"></div><svg width="15" height="20" style="position:absolute;left:973px;top:34px"><polygon points="3.5,7.4 10.5,7.4 7,3.8" fill="#1a1a1a"/><polygon points="3.5,12.4 10.5,12.4 7,16.0" fill="#1a1a1a"/></svg><div class="t " style="left:934.50px;top:37.74px;font:12px/12px 'Liberation Sans', sans-serif;color:#141414;">0.0</div><div class="t " style="left:924.30px;top:56.05px;font:7.5px/7.5px 'Liberation Sans', sans-serif;color:#b2b2b2;letter-spacing:-0.045px;">Shape model</div><div style="position:absolute;left:975px;top:54px;width:11px;height:11px;background:#f3f3f3;border:1px solid #c8c8c8;border-radius:2.5px"></div><div class="t k" style="left:906.00px;top:69.59px;font:11px/11px 'Liberation Sans', sans-serif;color:#107010;letter-spacing:-0.288px;">dia = 14.1 km</div><div class="t k" style="left:887.20px;top:84.09px;font:11px/11px 'Liberation Sans', sans-serif;color:#1414ee;letter-spacing:-0.141px;">a/b: 1.00, dMag: 0.00</div><div class="t k" style="left:891.60px;top:113.89px;font:11px/11px 'Liberation Sans', sans-serif;color:#1e1e2e;letter-spacing:-0.274px;">Motion: 12.65 km/s</div><div style="position:absolute;left:664px;top:135px;width:13px;height:13px;background:#0f62c4;border-radius:2.5px"></div><svg width="13" height="13" style="position:absolute;left:664px;top:135px"><polyline points="3.2,6.6 5.4,8.8 9.8,4.3" fill="none" stroke="#f0f0ff" stroke-width="0.9"/></svg><div class="t k" style="left:682.30px;top:136.79px;font:11px/11px 'Liberation Sans', sans-serif;color:#1e1e2e;letter-spacing:-0.274px;">Circular</div><div style="position:absolute;left:730px;top:135px;width:13px;height:13px;background:#0f62c4;border-radius:2.5px"></div><svg width="13" height="13" style="position:absolute;left:730px;top:135px"><polyline points="3.2,6.6 5.4,8.8 9.8,4.3" fill="none" stroke="#f0f0ff" stroke-width="0.9"/></svg><div class="t k" style="left:749.90px;top:130.29px;font:11px/11px 'Liberation Sans', sans-serif;color:#1e1e2e;letter-spacing:-0.477px;">Use assumed</div><div class="t k" style="left:749.90px;top:143.89px;font:11px/11px 'Liberation Sans', sans-serif;color:#1e1e2e;letter-spacing:-0.399px;">dia (14.1 km)</div><div style="position:absolute;left:832px;top:135px;width:11px;height:11px;background:#f7f7f7;border:1px solid #6e6e6e;border-radius:2.5px"></div><div class="t k" style="left:851.80px;top:136.79px;font:11px/11px 'Liberation Sans', sans-serif;color:#1e1e2e;letter-spacing:-0.226px;">Include Miss events</div><div style="position:absolute;left:662px;top:161px;width:322px;height:21px;border-top:2px solid #8c8c8c;border-left:2px solid #8c8c8c;border-bottom:1px solid #d6d6d6;border-right:1px solid #d6d6d6;box-sizing:border-box;box-shadow:inset -1px -1px 0 #fbfbfb"></div><div class="t k" style="left:671.00px;top:165.84px;font:bold 12px/12px 'Liberation Sans', sans-serif;color:#a8a8a8;letter-spacing:-0.158px;">Double stars - show</div><div style="position:absolute;left:796.1px;top:166.3px;width:12px;height:12px;background:#c4c4c4;border-radius:50%"></div><div style="position:absolute;left:799.6px;top:169.8px;width:5px;height:5px;background:#f0f0f0;border-radius:50%"></div><div style="position:absolute;left:848.1px;top:166.3px;width:10px;height:10px;border:1px solid #c8c8c8;border-radius:50%;background:#f4f4f4"></div><div style="position:absolute;left:913px;top:166.3px;width:10px;height:10px;border:1px solid #c8c8c8;border-radius:50%;background:#f4f4f4"></div><div class="t " style="left:813.70px;top:168.86px;font:9.5px/9.5px 'Liberation Sans', sans-serif;color:#a6a6a6;letter-spacing:-0.135px;">Both</div><div class="t " style="left:866.30px;top:168.86px;font:9.5px/9.5px 'Liberation Sans', sans-serif;color:#a6a6a6;letter-spacing:-0.317px;">Primary</div><div class="t " style="left:931.60px;top:168.86px;font:9.5px/9.5px 'Liberation Sans', sans-serif;color:#a6a6a6;letter-spacing:-0.324px;">Secondary</div><div class="t k" style="left:662.50px;top:194.74px;font:bold 12px/12px 'Liberation Sans', sans-serif;color:#0a620a;letter-spacing:0.482px;">Quality of the fit</div><div style="position:absolute;left:768px;top:188px;width:216px;height:20px;background:#f9f9f9;border:1px solid #8a8a8a;box-sizing:border-box"></div><div style="position:absolute;left:771px;top:191px;width:194px;height:14.5px;background:#ffff00"></div><div class="t k" style="left:771.50px;top:193.29px;font:11px/11px 'Liberation Sans', sans-serif;color:#101010;letter-spacing:-0.268px;">No reliable position or size</div><svg width="14" height="10" style="position:absolute;left:969px;top:194px"><polyline points="2,2.5 7,7.5 12,2.5" fill="none" stroke="#444" stroke-width="1"/></svg><div class="t k" style="left:688.50px;top:214.94px;font:bold 12px/12px 'Liberation Sans', sans-serif;color:#820410;letter-spacing:-0.016px;">Review flags</div><div style="position:absolute;left:768px;top:210px;width:216px;height:23px;background:#dff1f1;border-top:2px solid #8c8c8c;border-left:2px solid #8c8c8c;border-bottom:1px solid #f8f8f8;border-right:1px solid #d8e4e4;box-sizing:border-box"></div><div style="position:absolute;left:772px;top:214px;width:11px;height:11px;background:#f7f7f7;border:1px solid #6e6e6e;border-radius:2.5px"></div><div class="t k" style="left:791.70px;top:215.44px;font:12px/12px 'Liberation Sans', sans-serif;color:#1e1e2e;letter-spacing:0.061px;">0 items are tagged for review</div><div style="position:absolute;left:653px;top:232px;width:335px;height:82px;background:transparent;border-top:2px solid #6e6e6e;border-left:2px solid #6e6e6e;border-bottom:1px solid #fbfbfb;box-sizing:border-box"></div><div class="t k" style="left:661.60px;top:248.84px;font:bold 12px/12px 'Liberation Sans', sans-serif;color:#720c2c;">P</div><div class="t k" style="left:661.60px;top:261.94px;font:bold 12px/12px 'Liberation Sans', sans-serif;color:#720c2c;">L</div><div class="t k" style="left:661.00px;top:275.04px;font:bold 12px/12px 'Liberation Sans', sans-serif;color:#720c2c;">O</div><div class="t k" style="left:661.60px;top:288.14px;font:bold 12px/12px 'Liberation Sans', sans-serif;color:#720c2c;">T</div><div class="t k" style="left:681.50px;top:244.84px;font:bold 12px/12px 'Liberation Sans', sans-serif;color:#720c2c;letter-spacing:0.028px;">Scale</div><div style="position:absolute;left:719.5px;top:241px;width:268.5px;height:19px;background:#fcf5cc"></div><div style="position:absolute;left:725px;top:246px;width:258px;height:4px;background:#f4f4f6;border:1px solid #c4c4c8;box-sizing:border-box"></div><svg width="269" height="19" style="position:absolute;left:719.5px;top:241px"><rect x="8.50" y="15" width="1" height="3" fill="#a090b0"/><rect x="20.50" y="15" width="1" height="3" fill="#a090b0"/><rect x="33.50" y="15" width="1" height="3" fill="#a090b0"/><rect x="45.50" y="15" width="1" height="3" fill="#a090b0"/><rect x="58.50" y="15" width="1" height="3" fill="#a090b0"/><rect x="70.50" y="15" width="1" height="3" fill="#a090b0"/><rect x="83.50" y="15" width="1" height="3" fill="#a090b0"/><rect x="96.50" y="15" width="1" height="3" fill="#a090b0"/><rect x="108.50" y="15" width="1" height="3" fill="#a090b0"/><rect x="121.50" y="15" width="1" height="3" fill="#a090b0"/><rect x="133.50" y="15" width="1" height="3" fill="#a090b0"/><rect x="146.50" y="15" width="1" height="3" fill="#a090b0"/><rect x="159.50" y="15" width="1" height="3" fill="#a090b0"/><rect x="171.50" y="15" width="1" height="3" fill="#a090b0"/><rect x="184.50" y="15" width="1" height="3" fill="#a090b0"/><rect x="196.50" y="15" width="1" height="3" fill="#a090b0"/><rect x="209.50" y="15" width="1" height="3" fill="#a090b0"/><rect x="221.50" y="15" width="1" height="3" fill="#a090b0"/><rect x="234.50" y="15" width="1" height="3" fill="#a090b0"/><rect x="247.50" y="15" width="1" height="3" fill="#a090b0"/><rect x="259.50" y="15" width="1" height="3" fill="#a090b0"/></svg><svg width="8" height="11" style="position:absolute;left:829.8px;top:243.8px"><polygon points="0.2,0.2 6.3,0.2 6.3,6.8 3.25,9.8 0.2,6.8" fill="#0a6ccf"/></svg><div class="t k" style="left:681.50px;top:270.64px;font:bold 12px/12px 'Liberation Sans', sans-serif;color:#720c2c;letter-spacing:-0.128px;">Size</div><div style="position:absolute;left:711.5px;top:266.5px;width:162px;height:22px;border-top:2px solid #6e6e6e;border-left:2px solid #6e6e6e;border-bottom:1px solid #fbfbfb;border-right:1px solid #fbfbfb;box-sizing:border-box"></div><div style="position:absolute;left:720.8px;top:271.0px;width:13.0px;height:13.0px;background:#0f62c4;border-radius:50%"></div><div style="position:absolute;left:725.0999999999999px;top:275.3px;width:4.4px;height:4.4px;background:#fff;border-radius:50%"></div><div class="t k" style="left:739.70px;top:271.84px;font:bold 12px/12px 'Liberation Sans', sans-serif;color:#720c2c;letter-spacing:-0.584px;">normal</div><div style="position:absolute;left:784.8px;top:271.0px;width:11.0px;height:11.0px;border:1px solid #5a5a5a;border-radius:50%;background:#f6f6f6"></div><div class="t k" style="left:803.50px;top:271.84px;font:bold 12px/12px 'Liberation Sans', sans-serif;color:#720c2c;letter-spacing:0.273px;">x 2</div><div style="position:absolute;left:828.8px;top:271.0px;width:11.0px;height:11.0px;border:1px solid #5a5a5a;border-radius:50%;background:#f6f6f6"></div><div class="t k" style="left:847.20px;top:271.84px;font:bold 12px/12px 'Liberation Sans', sans-serif;color:#720c2c;letter-spacing:0.440px;">x 5</div><div class="t k" style="left:896.30px;top:271.54px;font:bold 12px/12px 'Liberation Sans', sans-serif;color:#7a107a;letter-spacing:-0.320px;">Form opacity</div><div class="t k" style="left:682.30px;top:296.84px;font:bold 12px/12px 'Liberation Sans', sans-serif;color:#720c2c;letter-spacing:0.016px;">Scroll range x1.25</div><div style="position:absolute;left:793px;top:296px;width:11px;height:11px;background:#f7f7f7;border:1px solid #6e6e6e;border-radius:2.5px"></div><div style="position:absolute;left:875.5px;top:289px;width:112.5px;height:21px;background:#fcf5cc"></div><div style="position:absolute;left:881px;top:295px;width:102px;height:4px;background:#f4f4f6;border:1px solid #c4c4c8;box-sizing:border-box"></div><svg width="113" height="21" style="position:absolute;left:875.5px;top:289px"><rect x="9.50" y="17.5" width="1" height="3" fill="#a090b0"/><rect x="27.50" y="17.5" width="1" height="3" fill="#a090b0"/><rect x="46.50" y="17.5" width="1" height="3" fill="#a090b0"/><rect x="65.50" y="17.5" width="1" height="3" fill="#a090b0"/><rect x="84.50" y="17.5" width="1" height="3" fill="#a090b0"/><rect x="103.50" y="17.5" width="1" height="3" fill="#a090b0"/></svg><svg width="9" height="13" style="position:absolute;left:975px;top:290.5px"><polygon points="0.3,0.3 8.2,0.3 8.2,9 4.25,12.5 0.3,9" fill="#0a6ccf"/></svg><div class="t k" style="left:667.30px;top:327.09px;font:11px/11px 'Liberation Sans', sans-serif;color:#1e1e2e;letter-spacing:-0.184px;">RMS fit 0.0 ±0.0 km</div><div style="position:absolute;left:660px;top:346px;width:326px;height:268px;background:#f5f7f7;border-top:1px solid #606060;border-left:1px solid #606060;border-bottom:1px solid #f4f4f4;border-right:1px solid #e8e8e8;box-sizing:border-box;box-shadow:inset 1px 1px 0 #a4a4a4"></div><svg width="80" height="30" style="position:absolute;left:660px;top:346px"><circle cx="8.5" cy="8.4" r="2" fill="#ff5ab4"/><circle cx="23.5" cy="8.4" r="2" fill="#ff5ab4"/><circle cx="38.5" cy="8.4" r="2" fill="#ff5ab4"/><circle cx="53.5" cy="8.4" r="2" fill="#ff5ab4"/><circle cx="68.5" cy="8.4" r="2" fill="#ff5ab4"/><rect x="6" y="18.5" width="65.6" height="3" fill="#ff0000"/></svg><div class="t " style="left:755.60px;top:349.48px;font:13.6px/13.6px 'Liberation Mono', monospace;color:#262626;">1(P) Predicted</div><div class="t " style="left:755.60px;top:361.48px;font:13.6px/13.6px 'Liberation Mono', monospace;color:#262626;">2    S Messner, near Mountai</div><svg width="323" height="14" style="position:absolute;left:662px;top:599px" shape-rendering="crispEdges"><rect width="323" height="14" fill="url(#dz)"/></svg><div style="position:absolute;left:678px;top:603.5px;width:240px;height:2px;background:#7a7a7a"></div>
</body></html>
